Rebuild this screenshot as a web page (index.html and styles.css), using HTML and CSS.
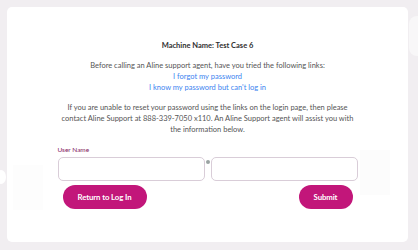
FILE: index.html
```html
<!DOCTYPE html>
<html>
<head>
<meta charset="utf-8">
<link rel="stylesheet" href="styles.css">
</head>
<body>
<div class="deco deco-left"></div>
<div class="deco deco-square-l"></div>
<div class="deco deco-square-r"></div>
<div class="deco deco-right"></div>
<main class="card">
  <h1 class="title">Machine Name: Test Case 6</h1>
  <p class="intro">Before calling an Aline support agent, have you tried the following links:</p>
  <a class="link" href="#">I forgot my password</a>
  <a class="link" href="#">I know my password but can't log in</a>
  <p class="info">If you are unable to reset your password using the links on the login page, then please contact Aline Support at 888-339-7050 x110. An Aline Support agent will assist you with the information below.</p>
  <form class="form">
    <label class="label">User Name</label>
    <div class="inputs">
      <input class="field" type="text">
      <span class="at"></span>
      <input class="field" type="text">
    </div>
    <div class="actions">
      <button type="button" class="btn btn-return">Return to Log In</button>
      <button type="button" class="btn btn-submit">Submit</button>
    </div>
  </form>
</main>
</body>
</html>
```
FILE: styles.css
```css
html, body {
  margin: 0;
  padding: 0;
}
body {
  width: 418px;
  height: 250px;
  background: #f1eef1;
  font-family: Lato, "Open Sans", sans-serif;
  padding: 7px 10px 8px 7px;
  box-sizing: border-box;
  position: relative;
  overflow: hidden;
}
.card {
  position: relative;
  z-index: 1;
  background: #ffffff;
  border-radius: 5px;
  height: 235px;
  display: flex;
  flex-direction: column;
  align-items: center;
  padding-top: 33px;
  box-sizing: border-box;
}
.title {
  margin: 0;
  font-size: 7.5px;
  line-height: 11px;
  font-weight: 700;
  color: #2f2f2f;
}
.intro {
  margin: 9px 0 0;
  font-size: 7.5px;
  line-height: 11px;
  color: #555;
}
.link {
  font-size: 7.5px;
  line-height: 11px;
  color: #3d84f0;
  text-decoration: none;
}
.info {
  margin: 9px 0 0;
  width: 296px;
  text-align: center;
  font-size: 7.5px;
  line-height: 11px;
  color: #555;
}
.form {
  width: 300px;
  margin-top: 9px;
  display: flex;
  flex-direction: column;
}
.label {
  font-size: 6.5px;
  line-height: 9px;
  color: #84205e;
  margin-top: 1px;
}
.inputs {
  margin-top: 3px;
  display: flex;
  align-items: flex-start;
}
.field {
  width: 147px;
  height: 24px;
  box-sizing: border-box;
  border: 1px solid #d9cdd8;
  border-radius: 5px;
  margin: 0;
  padding: 0 6px;
  background: #fff;
}
.at {
  width: 4px;
  height: 4px;
  margin: 3px 1px 0;
  border-radius: 50%;
  background: #9aa3a2;
}
.actions {
  margin-top: 4px;
  padding: 0 5px;
  display: flex;
  justify-content: space-between;
}
.btn {
  height: 24px;
  border: none;
  border-radius: 12px;
  background: #c2167a;
  color: #fff;
  font-family: Lato, "Open Sans", sans-serif;
  font-weight: 700;
  font-size: 7.8px;
  padding: 0;
  letter-spacing: -0.1px;
}
.btn-return { width: 84px; }
.btn-submit { width: 54px; }
.deco {
  position: absolute;
}
.deco-left {
  left: -4px;
  top: 170px;
  width: 10px;
  height: 14px;
  border-radius: 50%;
  background: #ffffff;
}
.deco-square-l {
  left: 13px;
  top: 165px;
  width: 30px;
  height: 45px;
  background: rgba(240, 236, 240, 0.12);
  z-index: 2;
}
.deco-square-r {
  left: 360px;
  top: 150px;
  width: 30px;
  height: 45px;
  background: rgba(240, 236, 240, 0.18);
  z-index: 2;
}
.deco-right {
  left: 409px;
  top: 16px;
  width: 20px;
  height: 40px;
  border-radius: 8px 0 0 8px;
  background: #f8f7f8;
}
```
